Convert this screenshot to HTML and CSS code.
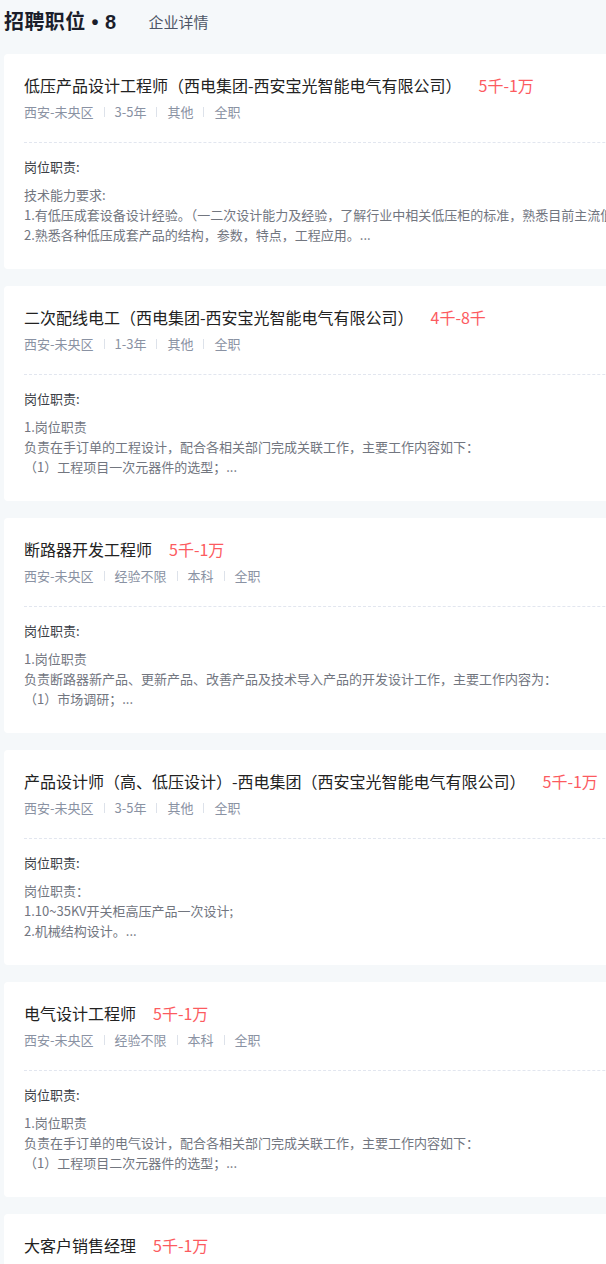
FILE: index.html
```html
<!doctype html>
<html lang="zh-CN">
  <head>
    <meta charset="UTF-8" />
    <meta name="viewport" content="width=device-width, initial-scale=1.0" />
    <title>招聘职位</title>
    <link rel="stylesheet" href="styles.css">
  </head>
  <body>
    <div class="page">
      <div class="tabs">
        <h2 class="tab-title">招聘职位 • 8</h2>
        <span class="tab-link">企业详情</span>
      </div>

      <div class="job-list">
        <div class="job">
          <div class="job-head">
            <span class="job-name">低压产品设计工程师（西电集团-西安宝光智能电气有限公司）</span>
            <span class="salary">5千-1万</span>
          </div>
          <div class="meta">
            <span>西安-未央区</span><i></i><span>3-5年</span><i></i><span>其他</span><i></i><span>全职</span>
          </div>
          <div class="duty">
            <p class="duty-title">岗位职责:</p>
            <p class="duty-text">技术能力要求:<br>1.有低压成套设备设计经验。（一二次设计能力及经验，了解行业中相关低压柜的标准，熟悉目前主流低压柜型）<br>2.熟悉各种低压成套产品的结构，参数，特点，工程应用。...</p>
          </div>
        </div>

        <div class="job">
          <div class="job-head">
            <span class="job-name">二次配线电工（西电集团-西安宝光智能电气有限公司）</span>
            <span class="salary">4千-8千</span>
          </div>
          <div class="meta">
            <span>西安-未央区</span><i></i><span>1-3年</span><i></i><span>其他</span><i></i><span>全职</span>
          </div>
          <div class="duty">
            <p class="duty-title">岗位职责:</p>
            <p class="duty-text">1.岗位职责<br>负责在手订单的工程设计，配合各相关部门完成关联工作，主要工作内容如下：<br>（1）工程项目一次元器件的选型；...</p>
          </div>
        </div>

        <div class="job">
          <div class="job-head">
            <span class="job-name">断路器开发工程师</span>
            <span class="salary">5千-1万</span>
          </div>
          <div class="meta">
            <span>西安-未央区</span><i></i><span>经验不限</span><i></i><span>本科</span><i></i><span>全职</span>
          </div>
          <div class="duty">
            <p class="duty-title">岗位职责:</p>
            <p class="duty-text">1.岗位职责<br>负责断路器新产品、更新产品、改善产品及技术导入产品的开发设计工作，主要工作内容为：<br>（1）市场调研；...</p>
          </div>
        </div>

        <div class="job">
          <div class="job-head">
            <span class="job-name">产品设计师（高、低压设计）-西电集团（西安宝光智能电气有限公司）</span>
            <span class="salary">5千-1万</span>
          </div>
          <div class="meta">
            <span>西安-未央区</span><i></i><span>3-5年</span><i></i><span>其他</span><i></i><span>全职</span>
          </div>
          <div class="duty">
            <p class="duty-title">岗位职责:</p>
            <p class="duty-text">岗位职责：<br>1.10~35KV开关柜高压产品一次设计;<br>2.机械结构设计。...</p>
          </div>
        </div>

        <div class="job">
          <div class="job-head">
            <span class="job-name">电气设计工程师</span>
            <span class="salary">5千-1万</span>
          </div>
          <div class="meta">
            <span>西安-未央区</span><i></i><span>经验不限</span><i></i><span>本科</span><i></i><span>全职</span>
          </div>
          <div class="duty">
            <p class="duty-title">岗位职责:</p>
            <p class="duty-text">1.岗位职责<br>负责在手订单的电气设计，配合各相关部门完成关联工作，主要工作内容如下：<br>（1）工程项目二次元器件的选型；...</p>
          </div>
        </div>

        <div class="job">
          <div class="job-head">
            <span class="job-name">大客户销售经理</span>
            <span class="salary">5千-1万</span>
          </div>
          <div class="meta">
            <span>西安-未央区</span><i></i><span>经验不限</span><i></i><span>本科</span><i></i><span>全职</span>
          </div>
          <div class="duty">
            <p class="duty-title">岗位职责:</p>
            <p class="duty-text">1.岗位职责<br>负责公司产品的市场开拓与客户维护工作。...</p>
          </div>
        </div>
      </div>
    </div>
  </body>
</html>
```

FILE: styles.css
```css
* {
  box-sizing: border-box;
}
html,
body {
  margin: 0;
  overflow-x: hidden;
  background: #f5f8fa;
}
body {
  font-family: "Noto Sans CJK SC", "Noto Sans", sans-serif;
  color: #222;
}
.page {
  width: 720px;
  padding: 0 0 0 4px;
}
.tabs {
  display: flex;
  align-items: center;
  height: 44px;
  padding-bottom: 1px;
}
.tab-title {
  margin: 0;
  font-family: "Liberation Sans", "Noto Sans CJK SC", sans-serif;
  font-size: 20px;
  font-weight: 700;
  line-height: 28px;
  letter-spacing: 0.4px;
  color: #1b1e2b;
}
.tab-link {
  margin-left: 32px;
  font-size: 15px;
  line-height: 22px;
  color: #4d5566;
}
.job-list {
  display: flex;
  flex-direction: column;
  gap: 17px;
  padding-top: 10px;
}
.job {
  height: 215px;
  background: #fff;
  border-radius: 4px;
  padding: 20px 20px 0 20px;
}
.job-head {
  display: flex;
  align-items: center;
  white-space: nowrap;
  line-height: 22px;
}
.job-name {
  font-size: 16px;
  color: #222;
}
.salary {
  margin-left: 17px;
  font-size: 16px;
  color: #fc5b5f;
}
.meta {
  display: flex;
  align-items: center;
  margin-top: 7px;
  font-size: 13px;
  line-height: 18px;
  color: #8a92a3;
}
.meta i {
  display: block;
  width: 1px;
  height: 10px;
  margin: 0 10px;
  background: #dde2ea;
}
.duty {
  margin-top: 21px;
  padding-top: 15px;
  border-top: 1px dashed #e2e6ef;
}
.duty p {
  margin: 0;
  white-space: nowrap;
}
.duty-title {
  font-size: 13px;
  line-height: 18px;
  color: #3a3d45;
}
.duty-text {
  margin-top: 9px !important;
  font-size: 13px;
  line-height: 20px;
  color: #72767f;
}
```
